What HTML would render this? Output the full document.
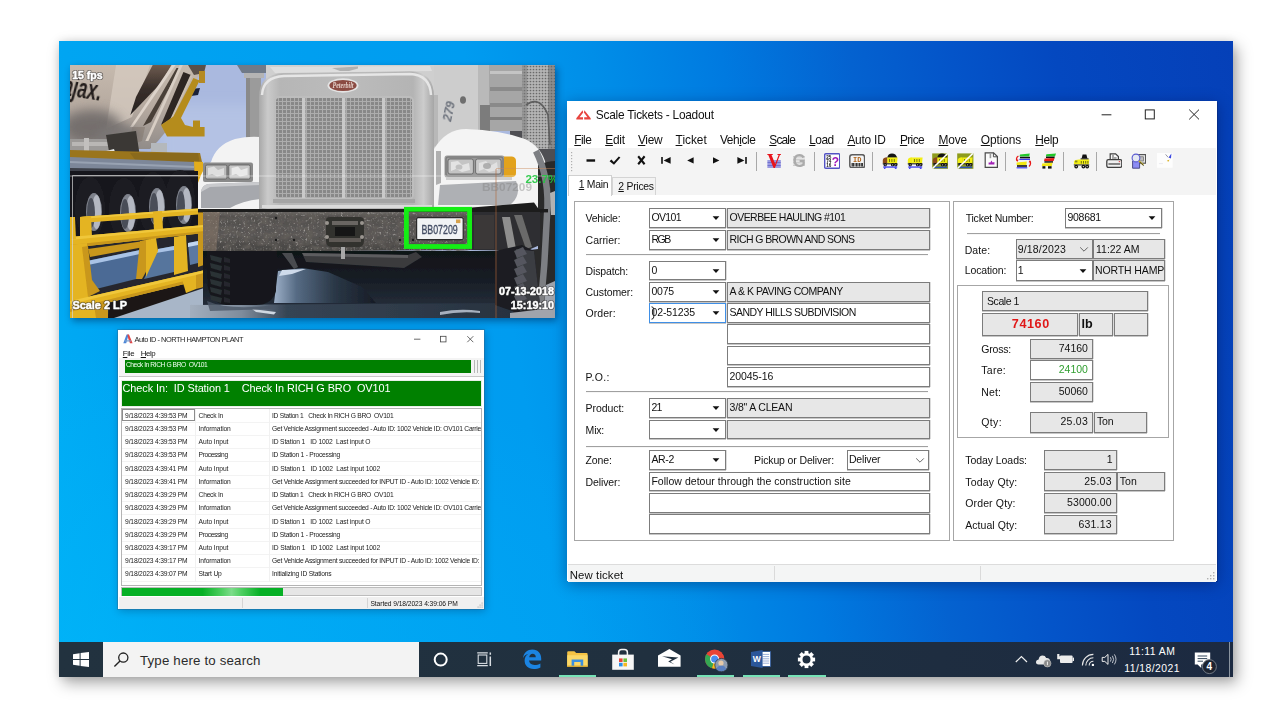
<!DOCTYPE html>
<html lang="en"><head><meta charset="utf-8"><title>Scale Tickets - Loadout</title>
<style>
html,body{margin:0;padding:0}
body{width:1284px;height:722px;background:#fff;position:relative;overflow:hidden;font-family:'Liberation Sans',sans-serif;color:#000}
body div,body span.t,body svg{position:absolute}
span.t{white-space:pre;line-height:1;display:block}
u{text-decoration:underline;text-underline-offset:1px}

</style></head>
<body>
<div style="left:59px;top:41px;width:1174px;height:636px;background:linear-gradient(80deg,#00aef5 0%,#00a5f2 9%,#009ff0 28%,#009cf0 40%,#008ee8 50%,#007ae0 60%,#0462d0 70%,#0454c9 78%,#0448c0 86%,#0540b8 100%);box-shadow:0 0 8px rgba(0,0,0,.10),4px 6px 14px rgba(0,0,0,.34);"></div>
<div style="left:59px;top:41px;width:1174px;height:636px;background:radial-gradient(ellipse 620px 330px at 6% 100%,rgba(0,184,250,.5),rgba(0,184,250,0) 100%);"></div>
<svg style="left:70px;top:65px;box-shadow:2px 3px 7px rgba(0,20,60,.45)" width="485" height="253" viewBox="0 0 485 253"><defs><filter id="bl" x="-5%" y="-5%" width="110%" height="110%"><feGaussianBlur stdDeviation="0.7"/></filter><filter id="bl2" x="-20%" y="-20%" width="140%" height="140%"><feGaussianBlur stdDeviation="3"/></filter><filter id="bl3" x="-30%" y="-30%" width="160%" height="160%"><feGaussianBlur stdDeviation="6"/></filter><linearGradient id="drum" x1="0" y1="0" x2="0" y2="1"><stop offset="0" stop-color="#c6baae"/><stop offset=".5" stop-color="#b6aaa0"/><stop offset="1" stop-color="#918c89"/></linearGradient><linearGradient id="surr" x1="0" y1="0" x2="1" y2="0"><stop offset="0" stop-color="#a8a8a8"/><stop offset=".05" stop-color="#cacaca"/><stop offset=".12" stop-color="#b6b6b6"/><stop offset=".5" stop-color="#bcbcbc"/><stop offset=".88" stop-color="#b4b4b4"/><stop offset=".94" stop-color="#cccccc"/><stop offset="1" stop-color="#a6a6a6"/></linearGradient><linearGradient id="bump" x1="0" y1="0" x2="0" y2="1"><stop offset="0" stop-color="#6a6764"/><stop offset=".12" stop-color="#53504e"/><stop offset=".55" stop-color="#5a5755"/><stop offset="1" stop-color="#454341"/></linearGradient><linearGradient id="gnd" x1="0" y1="0" x2="1" y2="0"><stop offset="0" stop-color="#9db0c8"/><stop offset=".22" stop-color="#566b84"/><stop offset=".6" stop-color="#2a3746"/><stop offset="1" stop-color="#171c26"/></linearGradient><pattern id="mesh" width="4" height="4" patternUnits="userSpaceOnUse"><rect width="4" height="4" fill="#8b8b8b"/><path d="M0 0.5h4M0.5 0v4" stroke="#b9b9b9" stroke-width="1"/></pattern><pattern id="perf" width="3" height="3" patternUnits="userSpaceOnUse"><rect width="3" height="3" fill="#b4b4b4"/><circle cx="1.5" cy="1.5" r="0.85" fill="#6a6a6a"/></pattern><pattern id="spk" width="9" height="7" patternUnits="userSpaceOnUse"><circle cx="2" cy="2" r="0.8" fill="#a8a49e"/><circle cx="6.5" cy="4.6" r="0.7" fill="#3a3836"/><circle cx="4.6" cy="0.8" r="0.5" fill="#c8c4be"/><circle cx="7.8" cy="1.6" r="0.6" fill="#8c8884"/><circle cx="1.2" cy="5.6" r="0.6" fill="#444"/></pattern><linearGradient id="st1" x1="0" y1="0" x2="0" y2="1"><stop offset="0" stop-color="#6e5c50"/><stop offset=".45" stop-color="#3a302b"/><stop offset="1" stop-color="#262120"/></linearGradient><linearGradient id="bot" x1="0" y1="0" x2="1" y2="0"><stop offset="0" stop-color="#a3afbe"/><stop offset=".16" stop-color="#7f8c9c"/><stop offset=".3" stop-color="#364454"/><stop offset="1" stop-color="#28323f"/></linearGradient><linearGradient id="under" x1="0" y1="0" x2="0" y2="1"><stop offset="0" stop-color="#101317"/><stop offset=".4" stop-color="#171c24"/><stop offset=".8" stop-color="#232c38"/><stop offset="1" stop-color="#2c3644"/></linearGradient><filter id="nzl" x="0" y="0" width="100%" height="100%"><feTurbulence type="fractalNoise" baseFrequency="0.42" numOctaves="2" seed="4"/><feColorMatrix type="matrix" values="0 0 0 0 0.78  0 0 0 0 0.76  0 0 0 0 0.73  3.4 0 0 0 -2.05"/></filter><filter id="nzd" x="0" y="0" width="100%" height="100%"><feTurbulence type="fractalNoise" baseFrequency="0.11 0.16" numOctaves="2" seed="9"/><feColorMatrix type="matrix" values="0 0 0 0 0.12  0 0 0 0 0.11  0 0 0 0 0.10  0 2.6 0 0 -1.05"/></filter><clipPath id="pc"><rect width="485" height="253"/></clipPath></defs><g clip-path="url(#pc)"><g filter="url(#bl)"><rect width="485" height="253" fill="#aab9df"/><rect x="90" y="40" width="110" height="60" fill="#b4c2e4" filter="url(#bl3)"/><path d="M0 0 L134 0 L127 14 L118 32 L108 50 L98 64 L88 76 L80 84 L0 84Z" fill="url(#drum)"/><path d="M46 0 L80 0 L62 52 L36 64Z" fill="#d6cbc0" opacity=".75"/><path d="M82.7 0 L101.5 0 L91 18 L60.3 50 L66 32Z" fill="url(#st1)"/><path d="M102 0 L105.6 0 L63 62 L60 62Z" fill="#ddd3ca"/><path d="M106.5 3 L110 3 L81 57 L73 61Z" fill="#4a3f38"/><path d="M109.8 0 L112.8 0 L78.4 76 L75.4 76Z" fill="#d8cec4"/><path d="M113.4 7 L121 10 L101 54 L91 60Z" fill="#2e2620"/><path d="M120.4 10 L122.4 11 L101.4 56 L99.4 56Z" fill="#cbbfb2"/><path d="M62 62 L75 62 L72 76 L60 80Z" fill="#8a7f76" opacity=".7"/><ellipse cx="22" cy="62" rx="30" ry="17" fill="#6f6b69" filter="url(#bl3)" opacity=".9"/><ellipse cx="48" cy="70" rx="22" ry="10" fill="#7a7674" filter="url(#bl2)" opacity=".8"/></g><text x="-8" y="31" font-family="'Liberation Sans',sans-serif" font-size="27" font-weight="700" font-style="italic" fill="#241c1a" transform="rotate(9 0 31)" textLength="39" lengthAdjust="spacingAndGlyphs" filter="url(#bl)">ajax.</text><g filter="url(#bl)"><path d="M118 0 L136 0 L134 8 L124 10Z" fill="#5a5048"/><rect x="129" y="6" width="6" height="12" fill="#b58a24"/><path d="M121 24 L130 23 L128 30 L121 31Z" fill="#1d2438"/><path d="M123.4 13 L129.6 15.4 L111 53 L115 60 L123 62 L123 55.5 L130 55.5 L130 62 L134.6 62 L134.6 71.6 L97 71.6 L91 60 L103.4 51.6Z" fill="#b58c1f"/><rect x="0" y="74" width="52" height="12" fill="#9c9a98"/><rect x="2" y="77" width="46" height="4" fill="#b9b7b5"/><rect x="14" y="73" width="5" height="13" fill="#c2c0be"/><path d="M36 70 L66 66 L70 92 L40 92Z" fill="#3a3834"/><rect x="81" y="78" width="16" height="14" fill="#b4b8bc"/><path d="M36 86 L44 84 L46 90 L38 91Z" fill="#e8e8e8"/><path d="M0 85 L130 88 L132 97 L0 94Z" fill="#9a751c"/><path d="M60 88 L128 88 L130 100 L66 96Z" fill="#8a6a1e"/><path d="M0 92 L124 97 L126 106 L0 105Z" fill="#7d8799"/><path d="M0 96 L124 101 L124 103 L0 98Z" fill="#98a2b2"/><path d="M0 103 L126 105 L126 108 L0 107Z" fill="#3c4048"/><path d="M124 96.5 L133 97 L133 119 L125 119Z" fill="#e3ad1e"/><rect x="0" y="106" width="128" height="70" fill="#15151a"/><ellipse cx="20" cy="143" rx="15" ry="31" fill="#1e1e24"/><ellipse cx="24" cy="147" rx="8" ry="19" fill="#7e828c"/><ellipse cx="26.5" cy="147" rx="4.6" ry="17" fill="#b4b8c2"/><ellipse cx="21" cy="148" rx="4" ry="15" fill="#4a4e58"/><ellipse cx="54" cy="144" rx="15" ry="31" fill="#1e1e24"/><ellipse cx="58" cy="148" rx="8" ry="19" fill="#7e828c"/><ellipse cx="60.5" cy="148" rx="4.6" ry="17" fill="#b4b8c2"/><ellipse cx="55" cy="149" rx="4" ry="15" fill="#4a4e58"/><ellipse cx="83" cy="138" rx="15" ry="31" fill="#1e1e24"/><ellipse cx="87" cy="142" rx="8" ry="19" fill="#7e828c"/><ellipse cx="89.5" cy="142" rx="4.6" ry="17" fill="#b4b8c2"/><ellipse cx="84" cy="143" rx="4" ry="15" fill="#4a4e58"/><ellipse cx="110" cy="136" rx="15" ry="31" fill="#1e1e24"/><ellipse cx="114" cy="140" rx="8" ry="19" fill="#7e828c"/><ellipse cx="116.5" cy="140" rx="4.6" ry="17" fill="#b4b8c2"/><ellipse cx="111" cy="141" rx="4" ry="15" fill="#4a4e58"/><path d="M0 176 L135 160 L135 253 L0 253Z" fill="#26282e"/><path d="M17 196 L70 185 L70 213 L26 224 L18 214Z" fill="#4b6b95"/><path d="M17 196 L70 185 L70 189 L18 200Z" fill="#a9c3e6"/><path d="M74 214 L88 184 L104 181 L104 207Z" fill="#56749d"/><path d="M88 184 L104 181 L104 185 L86 188Z" fill="#a9c3e6"/><path d="M118 178 L128 176 L128 198 L120 200Z" fill="#5b79a2"/><path d="M118 178 L128 176 L128 180 L118 182Z" fill="#c2d6f0"/><path d="M38 253 L40 238 L112 219 L118 229 L56 253Z" fill="#1c1917"/><path d="M44 253 L140 221 L190 221 L190 253Z" fill="#a8b6c8"/><path d="M10 152 L135 143 L135 149 L10 158Z" fill="#e4b422"/><path d="M10 152 L135 143 L135 145 L10 154Z" fill="#f0c73a"/><path d="M10 152 L21 151 L22 172 L10 174Z" fill="#e4b422"/><path d="M83 147 L92 146 L93 164 L84 165Z" fill="#e4b422"/><path d="M128 144 L134 144 L134 162 L128 163Z" fill="#c9971a"/><path d="M0 172 L134 160 L134 168 L0 183Z" fill="#e4b422"/><path d="M0 172 L134 160 L134 162 L0 175Z" fill="#f0c73a"/><path d="M0 180 L134 166 L134 168 L0 183Z" fill="#c9971a"/><path d="M0 152 L5 152 L6 174 L0 175Z" fill="#e4b422"/><path d="M0 180 L17 178 L19 253 L0 253Z" fill="#e4b422"/><path d="M12 182 L18 181 L22 215 L30 226 L18 232Z" fill="#c9971a"/><path d="M18 184 L74 176 L74 182 L20 192Z" fill="#c9971a"/><path d="M70 176 L80 174 L82 196 L72 214 L66 214Z" fill="#c9971a"/><path d="M76 175 L86 173 L88 186 L76 212Z" fill="#e4b422"/><path d="M104 172 L116 170 L118 206 L104 210Z" fill="#e4b422"/><path d="M128 168 L134 167 L134 200 L128 202Z" fill="#c9971a"/><path d="M0 236 L135 205 L135 214 L0 247Z" fill="#e4b422"/><path d="M0 236 L135 205 L135 208 L0 239Z" fill="#f0c73a"/><path d="M0 244 L135 211 L135 214 L0 247Z" fill="#c9971a"/><path d="M10 244 L38 238 L38 253 L10 253Z" fill="#e4b422"/><path d="M24 240 L38 237 L38 253 L26 253Z" fill="#c9971a"/><path d="M112 214 L126 211 L126 224 L116 228Z" fill="#e4b422"/><path d="M126 210 L134 208 L134 222 L126 224Z" fill="#c9971a"/><rect x="176" y="0" width="15" height="74" fill="#9b9b9b"/><rect x="176" y="0" width="4" height="74" fill="#8a8a8a"/><path d="M167 0 L214 0 L206 8 L172 8Z" fill="#6f7a88"/><rect x="174" y="8" width="20" height="5" fill="#b4b4b4"/><path d="M128 146 L128 118 Q134 100 141 97 Q146 80 165 74 Q178 71 190 72 L192 146Z" fill="#f3f3f3"/><path d="M131 143 L131 127 Q132 120 138 119 L190 117 L190 134 Q172 136 160 143Z" fill="#a6a8ad"/><path d="M131 127 Q132 120 138 119 L190 117 L190 120 L140 122Z" fill="#c9cacd"/><rect x="133" y="97.6" width="50" height="19.4" rx="2" fill="#8a8a8a"/><rect x="135.5" y="100" width="21.4" height="14" rx="1.5" fill="#bcbcbc" stroke="#5a5a5a" stroke-width="0.8"/><rect x="158.8" y="100" width="21.4" height="14" rx="1.5" fill="#c8c8c8" stroke="#5a5a5a" stroke-width="0.8"/><path d="M138 103 L144 101.6 L148 105 L154 103 L154 110 L147 111.6 L142 109 L138 110.6Z" fill="#e6e6e6" opacity=".8"/><path d="M161.6 103 L168 101.6 L171 105 L177.6 103 L177.6 110 L170 111.6 L166 109 L161.6 110.6Z" fill="#f0f0f0" opacity=".85"/><path d="M196 0 L408 0 L408 70 L196 70Z" fill="#cfcfcf"/><path d="M189 144 L189 32 Q189 9 214 8 L340 6 Q364 7 364 32 L364 144Z" fill="url(#surr)"/><path d="M192 30 Q193 12 214 11 L340 9 Q360 10 361 30" fill="none" stroke="#e6e6e6" stroke-width="2.5"/><path d="M200 2 L360 1 L362 6 L205 8Z" fill="#dedede"/><path d="M262 3 L288 1.5 L288 3.5 L279 6 L270 6Z" fill="#b0b0b0"/><rect x="205" y="32" width="138" height="102" rx="4" fill="url(#mesh)"/><rect x="205" y="32" width="138" height="102" rx="4" fill="#7a7a7a" opacity=".18"/><rect x="232" y="33" width="3.4" height="100" fill="#c9c9c9"/><rect x="272" y="33" width="3.4" height="100" fill="#c9c9c9"/><rect x="312" y="33" width="3.4" height="100" fill="#c9c9c9"/><rect x="205" y="32" width="138" height="102" rx="4" fill="none" stroke="#bdbdbd" stroke-width="2"/><path d="M203 134 L345 134 L345 138 L203 138Z" fill="#a4a4a4"/><path d="M192 140 L362 140 L362 143 L192 143Z" fill="#dadada"/><ellipse cx="273" cy="20.5" rx="15.5" ry="7.2" fill="#e4e4e4"/><ellipse cx="273" cy="20.5" rx="13.6" ry="5.6" fill="#8b4b42"/></g><text x="273" y="23.4" font-family="'Liberation Serif',serif" font-size="8" font-style="italic" font-weight="700" fill="#e4cfc8" text-anchor="middle" textLength="21" lengthAdjust="spacingAndGlyphs" filter="url(#bl)">Peterbilt</text><g filter="url(#bl)"><path d="M364 0 L409 0 L409 70 L386 70 L364 92Z" fill="#cdcdcd"/><path d="M364 30 L368 30 L368 80 L364 82Z" fill="#b8b8b8"/><ellipse cx="393" cy="35" rx="3" ry="3.8" fill="#6e6e6e"/></g><text x="381" y="57" font-family="'Liberation Sans',sans-serif" font-size="12" font-weight="700" font-style="italic" fill="#70757f" transform="rotate(-78 381 57)" filter="url(#bl)">279</text><g filter="url(#bl)"><rect x="440" y="60" width="45" height="90" fill="#505053"/><rect x="408" y="0" width="14" height="66" fill="#b9b9b9"/><rect x="419" y="0" width="34" height="66" fill="#a6a6a6"/><rect x="420" y="6" width="33" height="3" fill="#c4c4c4"/><rect x="420" y="22" width="33" height="4" fill="#8a8a8a"/><rect x="420" y="38" width="33" height="4" fill="#8a8a8a"/><rect x="420" y="52" width="33" height="3" fill="#7e7e7e"/><rect x="410" y="40" width="10" height="26" fill="#7c7c7c"/><rect x="452" y="0" width="33" height="84" fill="url(#perf)"/><rect x="452" y="0" width="5" height="84" fill="#777" opacity=".5"/><rect x="478" y="0" width="7" height="84" fill="#666" opacity=".5"/><path d="M456 40 Q470 30 478 50 L480 80" fill="none" stroke="#5e5e5e" stroke-width="1.6"/><path d="M364 146 L364 84 Q376 64 396 64 Q430 65 455 74 Q472 82 476 100 L478 146Z" fill="#f4f4f4"/><path d="M368 140 L370 120 L446 116 Q452 130 440 140Z" fill="#aeb0b4"/><path d="M396 142 L470 138 L470 146 L396 146Z" fill="#e9e9e9"/><path d="M366 86 L371 86 L371 118 L366 120Z" fill="#b0b0b0"/><rect x="374.5" y="90.5" width="60" height="22" rx="2.5" fill="#9a9a9a"/><rect x="376" y="92" width="57" height="19" rx="2" fill="none" stroke="#6e6e6e" stroke-width="0.9"/><rect x="378" y="94" width="25.4" height="15" rx="2" fill="#c4c4c4" stroke="#5e5e5e" stroke-width="0.8"/><rect x="405.6" y="94" width="25.4" height="15" rx="2" fill="#cacaca" stroke="#5e5e5e" stroke-width="0.8"/><path d="M381 97 L388 96 L392 100 L399 98 L400 105 L392 107 L386 104 L381 106Z" fill="#ebebeb" opacity=".8"/><path d="M409 98 L416 96 L420 101 L427 97 L428 105 L419 107 L414 104 L409 106Z" fill="#e6e6e6" opacity=".8"/><ellipse cx="417" cy="101" rx="4" ry="3" fill="#9a9a9a" opacity=".7"/><ellipse cx="389" cy="102" rx="3.4" ry="2.6" fill="#a8a8a8" opacity=".6"/><path d="M434 91.5 L442 91.5 Q446 92 446 96 L446 108 Q446 112 442 112 L434 112Z" fill="#e2a21c"/><rect x="376" y="112" width="66" height="3" fill="#cfcfcf"/><path d="M468 100 Q478 96 485 96 L485 253 L436 253 L436 188 L468 184Z" fill="#2b2b2c"/><path d="M466 86 Q480 114 477 150 Q475 200 470 250" fill="none" stroke="#7d7f83" stroke-width="6.5"/><path d="M480 128 L485 126 L485 150 L481 150Z" fill="#b4b4b4"/><path d="M440 190 L464 186 L466 240 L442 246Z" fill="#3b3d42"/><rect x="128" y="144" width="350" height="3.4" fill="#1c1c1c"/><path d="M402 142.4 L464 137.6 L471 147.4 L402 147.4Z" fill="#1b1b1b"/><path d="M133 147 L404 147 L404 185 L133 187Z" fill="url(#bump)"/><path d="M133 147 L404 147 L404 185 L133 187Z" fill="url(#spk)" opacity=".3"/><rect x="133" y="147" width="271" height="39" filter="url(#nzd)"/><rect x="133" y="147" width="271" height="39" filter="url(#nzl)" opacity=".55"/><path d="M133 147 L150 147 L146 187 L133 187Z" fill="#8a7868" opacity=".5"/><path d="M402 147 L470 147 L470 180 L456 186 L402 185Z" fill="#2f2f30"/><path d="M404 150 L424 150 L424 184 L404 184Z" fill="#3a3938"/><path d="M432 152 L440 152 L446 184 L438 184Z" fill="#8e8e8e"/><path d="M444 150 L452 150 L462 182 L456 184Z" fill="#6a6a6a"/><circle cx="206" cy="153" r="1.2" fill="#1a1a1a"/><circle cx="206" cy="175" r="1.2" fill="#1a1a1a"/><circle cx="224" cy="175" r="1.2" fill="#1a1a1a"/><circle cx="330" cy="175" r="1.2" fill="#1a1a1a"/><circle cx="343" cy="175" r="1.2" fill="#1a1a1a"/><path d="M256 155 Q256 152 260 152 L290 152 Q294 152 294 156 L294 176 Q294 182 288 182 L262 182 Q256 182 256 176Z" fill="#33312f"/><rect x="262" y="156" width="26" height="4" fill="#6a6662"/><rect x="265" y="162" width="20" height="9" fill="#151414"/><rect x="259" y="173" width="32" height="4" fill="#5e5a56"/><circle cx="257" cy="158" r="2" fill="#9a958f"/><circle cx="292" cy="158" r="2" fill="#9a958f"/><circle cx="257" cy="172" r="2" fill="#9a958f"/><circle cx="292" cy="172" r="2" fill="#9a958f"/><rect x="133" y="186" width="310" height="67" fill="url(#under)"/><path d="M204 238 L208 206 L232 203 L258 207 L292 222 L306 238Z" fill="url(#gnd)"/><path d="M209 211 L212 205 L236 204 L222 209Z" fill="#cfdbeb"/><path d="M120 240 L443 238 L443 253 L120 253Z" fill="url(#bot)"/><path d="M182 244 L206 247 L204 249.5 L186 247Z" fill="#d0d8e2"/><path d="M370 247 Q390 243 410 246 L410 248 Q390 246 370 250Z" fill="#a6b0be"/><path d="M232 188 L338 190 L346 187 L352 192 L334 203 L236 197Z" fill="#3a3b3e"/><path d="M232 188 L338 190 L338 193 L234 191Z" fill="#5d5d5f"/><rect x="271" y="182" width="4" height="12" fill="#a8a8a8"/><path d="M212 188 L222 188 L228 202 L224 204Z" fill="#4a4c50"/><path d="M137 186 L206.5 186 L206 226 Q202 240 186 240 L156 240 Q140 238 137.5 220Z" fill="#17191d"/><path d="M140 190 L152 193 L151 198 L141 195Z" fill="#2c3036"/><path d="M154 192 L160 194 L160 198 L154 197Z" fill="#25282d"/><path d="M140 198 L152 201 L151 206 L141 203Z" fill="#2c3036"/><path d="M154 200 L160 202 L160 206 L154 205Z" fill="#25282d"/><path d="M140 206 L152 209 L151 214 L141 211Z" fill="#2c3036"/><path d="M154 208 L160 210 L160 214 L154 213Z" fill="#25282d"/><path d="M140 214 L152 217 L151 222 L141 219Z" fill="#2c3036"/><path d="M154 216 L160 218 L160 222 L154 221Z" fill="#25282d"/><path d="M140 222 L152 225 L151 230 L141 227Z" fill="#2c3036"/><path d="M154 224 L160 226 L160 230 L154 229Z" fill="#25282d"/><path d="M140 230 L152 233 L151 238 L141 235Z" fill="#2c3036"/><path d="M154 232 L160 234 L160 238 L154 237Z" fill="#25282d"/><path d="M137 236 Q160 246 204 240 L204 244 L140 246Z" fill="#4c5866" opacity=".8"/><path d="M425 186 L452 180 L464 186 L470 240 L448 248 L425 240Z" fill="#1b1d21"/><path d="M446 184 L464 186 L470 240 L450 246Z" fill="#3a3c42"/><path d="M444 186 L453 182 L457 189 L447 193Z" fill="#54575e"/><path d="M444 195 L453 191 L457 198 L447 202Z" fill="#54575e"/><path d="M444 204 L453 200 L457 207 L447 211Z" fill="#54575e"/><path d="M444 213 L453 209 L457 216 L447 220Z" fill="#54575e"/><path d="M444 222 L453 218 L457 225 L447 229Z" fill="#54575e"/><path d="M444 231 L453 227 L457 234 L447 238Z" fill="#54575e"/><path d="M476 220 L485 216 L485 253 L440 253 L440 248 L474 244Z" fill="#a0a4ac"/></g><rect x="346.6" y="152.7" width="46.6" height="22" rx="1.5" fill="#f1f3f4" stroke="#2b2b2b" stroke-width="1.2" filter="url(#bl)"/><rect x="386" y="154.5" width="4.4" height="3.6" fill="#d6a24e" filter="url(#bl)"/><text x="351.4" y="168.9" font-family="'Liberation Sans',sans-serif" font-size="13.6" fill="#434d64" stroke="#434d64" stroke-width="0.35" textLength="36.4" lengthAdjust="spacingAndGlyphs" filter="url(#bl)">BB07209</text><rect x="336.4" y="144.3" width="63.2" height="37.2" fill="none" stroke="#14ee14" stroke-width="4.8"/><rect x="0" y="110.5" width="485" height="1" fill="#fff" opacity=".45"/><path d="M2.5 253 L2.5 110.5 L128 110.5" fill="none" stroke="#d6d6d6" stroke-width="1" opacity=".7"/><rect x="425.4" y="104" width="1.2" height="149" fill="#b4683a" opacity=".5"/><rect x="426" y="103" width="59" height="1" fill="#c98a5c" opacity=".45"/><text x="455.4" y="118.2" font-family="'Liberation Sans',sans-serif" font-size="10.5" font-weight="700" fill="#22c840" opacity=".9" textLength="33" lengthAdjust="spacingAndGlyphs">23.7%</text><text x="412" y="126.4" font-family="'Liberation Sans',sans-serif" font-size="10.5" font-weight="700" fill="#808080" opacity=".42" textLength="50" lengthAdjust="spacingAndGlyphs">BB07209</text><text x="2.2" y="14" font-size="10.6" font-family="'Liberation Sans',sans-serif" font-weight="700" fill="#222" stroke="#222" stroke-width="2.2" stroke-opacity=".55" fill-opacity=".55" stroke-linejoin="round" textLength="30.5" lengthAdjust="spacingAndGlyphs">15 fps</text><text x="2.2" y="14" font-size="10.6" font-family="'Liberation Sans',sans-serif" font-weight="700" fill="#fff" stroke="#fff" stroke-width="0.45" stroke-linejoin="round" textLength="30.5" lengthAdjust="spacingAndGlyphs">15 fps</text><text x="2.4" y="244.2" font-size="10.8" font-family="'Liberation Sans',sans-serif" font-weight="700" fill="#222" stroke="#222" stroke-width="2.2" stroke-opacity=".55" fill-opacity=".55" stroke-linejoin="round" textLength="54.6" lengthAdjust="spacingAndGlyphs">Scale 2 LP</text><text x="2.4" y="244.2" font-size="10.8" font-family="'Liberation Sans',sans-serif" font-weight="700" fill="#fff" stroke="#fff" stroke-width="0.45" stroke-linejoin="round" textLength="54.6" lengthAdjust="spacingAndGlyphs">Scale 2 LP</text><text x="429" y="230.4" font-size="10.4" font-family="'Liberation Sans',sans-serif" font-weight="700" fill="#222" stroke="#222" stroke-width="2.2" stroke-opacity=".55" fill-opacity=".55" stroke-linejoin="round" textLength="55" lengthAdjust="spacingAndGlyphs">07-13-2018</text><text x="429" y="230.4" font-size="10.4" font-family="'Liberation Sans',sans-serif" font-weight="700" fill="#fff" stroke="#fff" stroke-width="0.45" stroke-linejoin="round" textLength="55" lengthAdjust="spacingAndGlyphs">07-13-2018</text><text x="440.8" y="243.7" font-size="10.4" font-family="'Liberation Sans',sans-serif" font-weight="700" fill="#222" stroke="#222" stroke-width="2.2" stroke-opacity=".55" fill-opacity=".55" stroke-linejoin="round" textLength="43.2" lengthAdjust="spacingAndGlyphs">15:19:10</text><text x="440.8" y="243.7" font-size="10.4" font-family="'Liberation Sans',sans-serif" font-weight="700" fill="#fff" stroke="#fff" stroke-width="0.45" stroke-linejoin="round" textLength="43.2" lengthAdjust="spacingAndGlyphs">15:19:10</text></g></svg>
<div style="left:118px;top:330px;width:366px;height:279px;background:#fff;box-shadow:0 0 0 1px rgba(60,90,120,.35),1px 2px 8px rgba(0,0,40,.25);"></div>
<svg style="left:122.5px;top:334px" width="10" height="10" viewBox="0 0 10 10"><path d="M0.3 9.2 L3.6 0.6 L5.6 0.6 L3.2 9.2Z" fill="#4a86d8"/><path d="M4.4 0.6 L6 0.6 L9.6 9.2 L7 9.2 L5.2 4.6Z" fill="#e04848"/><path d="M2.2 6.2 L7.6 6.2 L8 7.6 L1.6 7.6Z" fill="#7aa0d0"/></svg>
<span class="t" style="left:134.50px;top:336.00px;font-size:7.4px;letter-spacing:-0.469px;color:#222;">Auto ID - NORTH HAMPTON PLANT</span>
<svg style="left:410px;top:332px" width="70" height="14" viewBox="0 0 70 14"><g stroke="#444" stroke-width="0.8" fill="none"><path d="M4 7.2h6.4"/><rect x="30.4" y="4.3" width="5.6" height="5.6"/><path d="M57.3 4.2l6 6M63.3 4.2l-6 6"/></g></svg>
<span class="t" style="left:122.80px;top:350.00px;font-size:7.9px;letter-spacing:-0.305px;color:#111;"><u>F</u>ile</span>
<span class="t" style="left:140.70px;top:350.00px;font-size:7.9px;letter-spacing:-0.434px;color:#111;"><u>H</u>elp</span>
<div style="left:119px;top:358px;width:365px;height:19px;background:#f4f4f4;"></div>
<div style="left:124.7px;top:359.6px;width:346.3px;height:13.899999999999977px;background:#008000;"></div>
<div style="left:119px;top:376px;width:365px;height:1px;background:#c8c8c8;"></div>
<div style="left:473.5px;top:360px;width:1.0px;height:13px;background:#b8b8b8;"></div>
<div style="left:476.5px;top:360px;width:1.0px;height:13px;background:#b8b8b8;"></div>
<div style="left:479.5px;top:360px;width:1.0px;height:13px;background:#b8b8b8;"></div>
<span class="t" style="left:125.90px;top:362.00px;font-size:6.7px;letter-spacing:-0.425px;color:#f2fff2;">Check In RICH G BRO  OV101</span>
<div style="left:121px;top:379.6px;width:360.6px;height:27.0px;background:#008000;border:1px solid #e8efe8;box-sizing:border-box;"></div>
<span class="t" style="left:122.50px;top:383.00px;font-size:10.9px;letter-spacing:-0.071px;color:#fff;">Check In:  ID Station 1    Check In RICH G BRO  OV101</span>
<div style="left:121px;top:408px;width:360.6px;height:177.5px;background:#fff;border:1px solid #b4b4b4;box-sizing:border-box;"></div>
<span class="t" style="left:125.10px;top:413.00px;font-size:6.7px;letter-spacing:-0.171px;color:#1a1a1a;">9/18/2023 4:39:53 PM</span>
<span class="t" style="left:198.60px;top:413.00px;font-size:6.7px;letter-spacing:-0.251px;color:#1a1a1a;">Check In</span>
<span class="t" style="left:272.00px;top:413.00px;font-size:6.7px;letter-spacing:-0.282px;color:#1a1a1a;">ID Station 1   Check In RICH G BRO  OV101</span>
<div style="left:122px;top:421.6px;width:359px;height:1.0px;background:#f3f3f3;"></div>
<span class="t" style="left:125.10px;top:426.00px;font-size:6.7px;letter-spacing:-0.171px;color:#1a1a1a;">9/18/2023 4:39:53 PM</span>
<span class="t" style="left:198.60px;top:426.00px;font-size:6.7px;letter-spacing:-0.124px;color:#1a1a1a;">Information</span>
<span class="t" style="left:272.00px;top:426.00px;font-size:6.7px;letter-spacing:-0.259px;color:#1a1a1a;">Get Vehicle Assignment succeeded - Auto ID: 1002 Vehicle ID: OV101 Carrie</span>
<div style="left:122px;top:434.9px;width:359px;height:1.0px;background:#f3f3f3;"></div>
<span class="t" style="left:125.10px;top:439.00px;font-size:6.7px;letter-spacing:-0.171px;color:#1a1a1a;">9/18/2023 4:39:53 PM</span>
<span class="t" style="left:198.60px;top:439.00px;font-size:6.7px;letter-spacing:-0.070px;color:#1a1a1a;">Auto Input</span>
<span class="t" style="left:272.00px;top:439.00px;font-size:6.7px;letter-spacing:-0.148px;color:#1a1a1a;">ID Station 1   ID 1002  Last input O</span>
<div style="left:122px;top:448.1px;width:359px;height:1.0px;background:#f3f3f3;"></div>
<span class="t" style="left:125.10px;top:452.00px;font-size:6.7px;letter-spacing:-0.171px;color:#1a1a1a;">9/18/2023 4:39:53 PM</span>
<span class="t" style="left:198.60px;top:452.00px;font-size:6.7px;letter-spacing:-0.389px;color:#1a1a1a;">Processing</span>
<span class="t" style="left:272.00px;top:452.00px;font-size:6.7px;letter-spacing:-0.239px;color:#1a1a1a;">ID Station 1 - Processing</span>
<div style="left:122px;top:461.4px;width:359px;height:1.0px;background:#f3f3f3;"></div>
<span class="t" style="left:125.10px;top:466.00px;font-size:6.7px;letter-spacing:-0.171px;color:#1a1a1a;">9/18/2023 4:39:41 PM</span>
<span class="t" style="left:198.60px;top:466.00px;font-size:6.7px;letter-spacing:-0.070px;color:#1a1a1a;">Auto Input</span>
<span class="t" style="left:272.00px;top:466.00px;font-size:6.7px;letter-spacing:-0.138px;color:#1a1a1a;">ID Station 1   ID 1002  Last input 1002</span>
<div style="left:122px;top:474.6px;width:359px;height:1.0px;background:#f3f3f3;"></div>
<span class="t" style="left:125.10px;top:479.00px;font-size:6.7px;letter-spacing:-0.171px;color:#1a1a1a;">9/18/2023 4:39:41 PM</span>
<span class="t" style="left:198.60px;top:479.00px;font-size:6.7px;letter-spacing:-0.124px;color:#1a1a1a;">Information</span>
<span class="t" style="left:272.00px;top:479.00px;font-size:6.7px;letter-spacing:-0.244px;color:#1a1a1a;">Get Vehicle Assignment succeeded for INPUT ID - Auto ID: 1002 Vehicle ID:</span>
<div style="left:122px;top:487.8px;width:359px;height:1.0px;background:#f3f3f3;"></div>
<span class="t" style="left:125.10px;top:492.00px;font-size:6.7px;letter-spacing:-0.171px;color:#1a1a1a;">9/18/2023 4:39:29 PM</span>
<span class="t" style="left:198.60px;top:492.00px;font-size:6.7px;letter-spacing:-0.251px;color:#1a1a1a;">Check In</span>
<span class="t" style="left:272.00px;top:492.00px;font-size:6.7px;letter-spacing:-0.282px;color:#1a1a1a;">ID Station 1   Check In RICH G BRO  OV101</span>
<div style="left:122px;top:501.1px;width:359px;height:1.0px;background:#f3f3f3;"></div>
<span class="t" style="left:125.10px;top:505.00px;font-size:6.7px;letter-spacing:-0.171px;color:#1a1a1a;">9/18/2023 4:39:29 PM</span>
<span class="t" style="left:198.60px;top:505.00px;font-size:6.7px;letter-spacing:-0.124px;color:#1a1a1a;">Information</span>
<span class="t" style="left:272.00px;top:505.00px;font-size:6.7px;letter-spacing:-0.259px;color:#1a1a1a;">Get Vehicle Assignment succeeded - Auto ID: 1002 Vehicle ID: OV101 Carrie</span>
<div style="left:122px;top:514.3px;width:359px;height:1.0px;background:#f3f3f3;"></div>
<span class="t" style="left:125.10px;top:519.00px;font-size:6.7px;letter-spacing:-0.171px;color:#1a1a1a;">9/18/2023 4:39:29 PM</span>
<span class="t" style="left:198.60px;top:519.00px;font-size:6.7px;letter-spacing:-0.070px;color:#1a1a1a;">Auto Input</span>
<span class="t" style="left:272.00px;top:519.00px;font-size:6.7px;letter-spacing:-0.148px;color:#1a1a1a;">ID Station 1   ID 1002  Last input O</span>
<div style="left:122px;top:527.6px;width:359px;height:1.0px;background:#f3f3f3;"></div>
<span class="t" style="left:125.10px;top:532.00px;font-size:6.7px;letter-spacing:-0.171px;color:#1a1a1a;">9/18/2023 4:39:29 PM</span>
<span class="t" style="left:198.60px;top:532.00px;font-size:6.7px;letter-spacing:-0.389px;color:#1a1a1a;">Processing</span>
<span class="t" style="left:272.00px;top:532.00px;font-size:6.7px;letter-spacing:-0.239px;color:#1a1a1a;">ID Station 1 - Processing</span>
<div style="left:122px;top:540.8px;width:359px;height:1.0px;background:#f3f3f3;"></div>
<span class="t" style="left:125.10px;top:545.00px;font-size:6.7px;letter-spacing:-0.171px;color:#1a1a1a;">9/18/2023 4:39:17 PM</span>
<span class="t" style="left:198.60px;top:545.00px;font-size:6.7px;letter-spacing:-0.070px;color:#1a1a1a;">Auto Input</span>
<span class="t" style="left:272.00px;top:545.00px;font-size:6.7px;letter-spacing:-0.138px;color:#1a1a1a;">ID Station 1   ID 1002  Last input 1002</span>
<div style="left:122px;top:554.0px;width:359px;height:1.0px;background:#f3f3f3;"></div>
<span class="t" style="left:125.10px;top:558.00px;font-size:6.7px;letter-spacing:-0.171px;color:#1a1a1a;">9/18/2023 4:39:17 PM</span>
<span class="t" style="left:198.60px;top:558.00px;font-size:6.7px;letter-spacing:-0.124px;color:#1a1a1a;">Information</span>
<span class="t" style="left:272.00px;top:558.00px;font-size:6.7px;letter-spacing:-0.244px;color:#1a1a1a;">Get Vehicle Assignment succeeded for INPUT ID - Auto ID: 1002 Vehicle ID:</span>
<div style="left:122px;top:567.3px;width:359px;height:1.0px;background:#f3f3f3;"></div>
<span class="t" style="left:125.10px;top:571.00px;font-size:6.7px;letter-spacing:-0.171px;color:#1a1a1a;">9/18/2023 4:39:07 PM</span>
<span class="t" style="left:198.60px;top:571.00px;font-size:6.7px;letter-spacing:-0.191px;color:#1a1a1a;">Start Up</span>
<span class="t" style="left:272.00px;top:571.00px;font-size:6.7px;letter-spacing:-0.189px;color:#1a1a1a;">Initializing ID Stations</span>
<div style="left:122px;top:580.5px;width:359px;height:1.0px;background:#f3f3f3;"></div>
<div style="left:195.3px;top:409px;width:1.0px;height:173px;background:#f1f1f1;"></div>
<div style="left:268.6px;top:409px;width:1.0px;height:173px;background:#f1f1f1;"></div>
<div style="left:122px;top:409.2px;width:72.6px;height:12.0px;border:1px solid #8c8c8c;box-sizing:border-box;"></div>
<div style="left:121px;top:587px;width:360.6px;height:9px;background:#e6e6e6;border:1px solid #bcbcbc;box-sizing:border-box;"></div>
<div style="left:121.5px;top:587.5px;width:161.5px;height:8.0px;background:linear-gradient(90deg,#06b025 0%,#06b025 50%,#4fcf62 62%,#7cdc8a 68%,#4fcf62 74%,#06b025 86%,#06b025 100%);"></div>
<div style="left:119px;top:597px;width:365px;height:12px;background:#f0f0f0;"></div>
<div style="left:242px;top:598px;width:1px;height:10px;background:#d4d4d4;"></div>
<div style="left:367px;top:598px;width:1px;height:10px;background:#d4d4d4;"></div>
<span class="t" style="left:370.40px;top:601.00px;font-size:6.7px;letter-spacing:-0.069px;color:#111;">Started 9/18/2023 4:39:06 PM</span>
<svg style="left:476px;top:601px" width="8" height="8" viewBox="0 0 8 8"><g fill="#b8b8b8"><rect x="5.5" y="1.5" width="1.2" height="1.2"/><rect x="5.5" y="3.5" width="1.2" height="1.2"/><rect x="3.5" y="3.5" width="1.2" height="1.2"/><rect x="5.5" y="5.5" width="1.2" height="1.2"/><rect x="3.5" y="5.5" width="1.2" height="1.2"/><rect x="1.5" y="5.5" width="1.2" height="1.2"/></g></svg>
<div style="left:567px;top:101px;width:650px;height:480px;background:#fff;box-shadow:1px 1px 0 0 rgba(10,30,90,.35),0 3px 14px rgba(0,10,60,.40);"></div>
<svg style="left:575.5px;top:109.5px" width="15" height="10" viewBox="0 0 15 10"><path d="M6.6 0.3 L7.2 2.5 L3.6 7.2 L7 7.2 L7 9.6 L0.3 9.6 L0.3 8.3Z" fill="#e8443f"/><path d="M8.4 0.3 L14.7 8.3 L14.7 9.6 L8.2 9.6 L8.2 7.2 L11.4 7.2 L7.9 2.5Z" fill="#e8443f"/></svg>
<span class="t" style="left:595.80px;top:110.00px;font-size:11.9px;letter-spacing:-0.244px;color:#111;">Scale Tickets - Loadout</span>
<svg style="left:1095px;top:105px" width="112" height="20" viewBox="0 0 112 20"><g stroke="#222" stroke-width="1" fill="none"><path d="M6.6 9.8h9.8"/><rect x="50.3" y="4.9" width="9" height="9"/><path d="M94.2 4.6l9.8 9.8M104 4.6l-9.8 9.8"/></g></svg>
<span class="t" style="left:574.30px;top:135.00px;font-size:11.9px;letter-spacing:-0.568px;color:#111;"><u>F</u>ile</span>
<span class="t" style="left:605.20px;top:135.00px;font-size:11.9px;letter-spacing:-0.250px;color:#111;"><u>E</u>dit</span>
<span class="t" style="left:637.90px;top:135.00px;font-size:11.9px;letter-spacing:-0.266px;color:#111;"><u>V</u>iew</span>
<span class="t" style="left:675.60px;top:135.00px;font-size:11.9px;letter-spacing:-0.030px;color:#111;"><u>T</u>icket</span>
<span class="t" style="left:720.00px;top:135.00px;font-size:11.9px;letter-spacing:-0.435px;color:#111;">Veh<u>i</u>cle</span>
<span class="t" style="left:769.30px;top:135.00px;font-size:11.9px;letter-spacing:-0.810px;color:#111;"><u>S</u>cale</span>
<span class="t" style="left:809.20px;top:135.00px;font-size:11.9px;letter-spacing:-0.488px;color:#111;"><u>L</u>oad</span>
<span class="t" style="left:847.40px;top:135.00px;font-size:11.9px;letter-spacing:-0.222px;color:#111;"><u>A</u>uto ID</span>
<span class="t" style="left:899.90px;top:135.00px;font-size:11.9px;letter-spacing:-0.599px;color:#111;"><u>P</u>rice</span>
<span class="t" style="left:938.50px;top:135.00px;font-size:11.9px;letter-spacing:-0.195px;color:#111;"><u>M</u>ove</span>
<span class="t" style="left:980.80px;top:135.00px;font-size:11.9px;letter-spacing:-0.112px;color:#111;"><u>O</u>ptions</span>
<span class="t" style="left:1035.30px;top:135.00px;font-size:11.9px;letter-spacing:-0.342px;color:#111;"><u>H</u>elp</span>
<div style="left:568px;top:147.5px;width:648px;height:47.5px;background:#f4f4f4;"></div>
<svg style="left:570px;top:150px" width="4" height="24" viewBox="0 0 4 24"><g fill="#b0b0b0"><rect x="1" y="2" width="1.2" height="1.2"/><rect x="1" y="5" width="1.2" height="1.2"/><rect x="1" y="8" width="1.2" height="1.2"/><rect x="1" y="11" width="1.2" height="1.2"/><rect x="1" y="14" width="1.2" height="1.2"/><rect x="1" y="17" width="1.2" height="1.2"/><rect x="1" y="20" width="1.2" height="1.2"/></g></svg>
<svg style="left:580px;top:150px" width="180" height="22" viewBox="0 0 180 22"><g fill="#111"><rect x="6.5" y="9.3" width="8.6" height="2.4"/><path d="M29.6 11.2 L31.4 9.6 L33.8 12 L38.8 6.4 L40.4 7.6 L34 14.8Z"/><path d="M57.4 7 L59 5.6 L61.4 8.6 L63.8 5.6 L65.4 7 L62.8 10.3 L65.4 13.6 L63.8 15 L61.4 12 L59 15 L57.4 13.6 L60 10.3Z"/><rect x="81.2" y="7" width="1.6" height="6.8"/><path d="M83.6 10.4 L90.6 7 L90.6 13.8Z"/><path d="M107.2 10.4 L113.6 7.2 L113.6 13.6Z"/><path d="M139.4 10.4 L133 7.2 L133 13.6Z"/><path d="M164.4 10.4 L157.4 7 L157.4 13.8Z"/><rect x="165.2" y="7" width="1.6" height="6.8"/></g></svg>
<div style="left:755.8px;top:151.5px;width:1.0px;height:19.5px;background:#a8a8a8;"></div>
<div style="left:813.7px;top:151.5px;width:1.0px;height:19.5px;background:#a8a8a8;"></div>
<div style="left:871.5px;top:151.5px;width:1.0px;height:19.5px;background:#a8a8a8;"></div>
<div style="left:1004.9px;top:151.5px;width:1.0px;height:19.5px;background:#a8a8a8;"></div>
<div style="left:1062.9px;top:151.5px;width:1.0px;height:19.5px;background:#a8a8a8;"></div>
<div style="left:1095.8px;top:151.5px;width:1.0px;height:19.5px;background:#a8a8a8;"></div>
<svg style="left:767px;top:153.6px" width="14.4" height="14.6" viewBox="0 0 14.4 14.6"><rect x="0.4" y="6" width="13.4" height="8" fill="#c8c8f0"/><rect x="0.4" y="6.6" width="13.4" height="0.8" fill="#5a5ac8"/><rect x="0.4" y="8.1" width="13.4" height="0.8" fill="#5a5ac8"/><rect x="0.4" y="9.6" width="13.4" height="0.8" fill="#5a5ac8"/><rect x="0.4" y="11.1" width="13.4" height="0.8" fill="#5a5ac8"/><rect x="0.4" y="12.6" width="13.4" height="0.8" fill="#5a5ac8"/><text x="7.1" y="14.3" font-family="'Liberation Serif',serif" font-size="21.5" font-weight="700" fill="#e8141c" text-anchor="middle" textLength="14.4" lengthAdjust="spacingAndGlyphs">V</text></svg><svg style="left:792px;top:153.4px" width="14.6" height="15" viewBox="0 0 14.6 15"><rect x="1" y="3.0" width="12" height="0.8" fill="#c4c4c4"/><rect x="1" y="4.5" width="12" height="0.8" fill="#c4c4c4"/><rect x="1" y="6.0" width="12" height="0.8" fill="#c4c4c4"/><rect x="1" y="7.5" width="12" height="0.8" fill="#c4c4c4"/><rect x="1" y="9.0" width="12" height="0.8" fill="#c4c4c4"/><rect x="1" y="10.5" width="12" height="0.8" fill="#c4c4c4"/><rect x="1" y="12.0" width="12" height="0.8" fill="#c4c4c4"/><text x="7.2" y="14.2" font-family="'Liberation Sans',sans-serif" font-size="19" font-weight="700" fill="#ababab" text-anchor="middle" textLength="13" lengthAdjust="spacingAndGlyphs">G</text></svg><svg style="left:824px;top:152.8px" width="16.4" height="16" viewBox="0 0 16.4 16"><rect x="0.7" y="0.7" width="15" height="14.6" rx="1" fill="#fff" stroke="#5353c4" stroke-width="1.4"/><text x="2.2" y="5.6" font-family="'Liberation Sans',sans-serif" font-size="4.6" font-weight="700" fill="#222">25</text><text x="2.2" y="10" font-family="'Liberation Sans',sans-serif" font-size="4.6" font-weight="700" fill="#222">74</text><text x="2.2" y="14.4" font-family="'Liberation Sans',sans-serif" font-size="4.6" font-weight="700" fill="#222">16</text><text x="11.4" y="13" font-family="'Liberation Sans',sans-serif" font-size="12" font-weight="700" fill="#a018b8" text-anchor="middle">?</text></svg><svg style="left:849px;top:153.6px" width="16.4" height="14.6" viewBox="0 0 16.4 14.6"><rect x="0.8" y="0.8" width="14.8" height="13" rx="2.4" fill="#f4f4f4" stroke="#5c5c5c" stroke-width="1.5"/><text x="8.2" y="7.6" font-family="'Liberation Mono',monospace" font-size="7" font-weight="700" fill="#b0641a" text-anchor="middle">ID</text><rect x="2.6" y="9" width="1.2" height="3.6" fill="#222"/><rect x="4.1" y="9" width="0.9" height="3.6" fill="#222"/><rect x="5.6" y="9" width="0.9" height="3.6" fill="#222"/><rect x="7.1" y="9" width="1.2" height="3.6" fill="#222"/><rect x="8.6" y="9" width="0.9" height="3.6" fill="#222"/><rect x="10.1" y="9" width="0.9" height="3.6" fill="#222"/><rect x="11.6" y="9" width="1.2" height="3.6" fill="#222"/><rect x="13.1" y="9" width="0.9" height="3.6" fill="#222"/></svg><svg style="left:881.8px;top:152.8px" width="16.6" height="16" viewBox="0 0 16.6 16"><path d="M5.2 4.8 Q6 0.4 10 0.4 Q14 0.4 15.2 4.8Z" fill="#141414"/><path d="M5.2 4.4 L15.6 4.4 L15 10.4 L5.2 10.4Z" fill="#f2ee14"/><path d="M0.8 10.4 L0.8 7 Q1.2 4.2 5.2 4.2 L5.2 10.4Z" fill="#8a4a1c"/><rect x="7.0" y="6" width="1" height="3" fill="#7a7a10"/><rect x="9.4" y="6" width="1" height="3" fill="#7a7a10"/><rect x="11.8" y="6" width="1" height="3" fill="#7a7a10"/><rect x="0.8" y="10.2" width="14.6" height="1.2" fill="#333"/><circle cx="3.2" cy="11.8" r="1.7" fill="#111"/><circle cx="10.6" cy="11.8" r="1.7" fill="#111"/><circle cx="13.8" cy="11.8" r="1.7" fill="#111"/><circle cx="3.2" cy="11.8" r="0.6" fill="#ccc"/><circle cx="10.6" cy="11.8" r="0.6" fill="#ccc"/><circle cx="13.8" cy="11.8" r="0.6" fill="#ccc"/><rect x="1.2" y="13.4" width="14" height="1.3" fill="#3c3cf0"/><path d="M2.4 14.6 L4.4 14.6 L3 16 L1.8 16Z M12 14.6 L14 14.6 L14.8 16 L13.4 16Z" fill="#3c3cf0"/></svg><svg style="left:906.8px;top:152.8px" width="16.6" height="16" viewBox="0 0 16.6 16"><path d="M5.2 4.4 L15.6 4.4 L15 10.4 L5.2 10.4Z" fill="#f2ee14"/><path d="M0.8 10.4 L0.8 7 Q1.2 4.2 5.2 4.2 L5.2 10.4Z" fill="#f2ee14"/><rect x="7.0" y="6" width="1" height="3" fill="#7a7a10"/><rect x="9.4" y="6" width="1" height="3" fill="#7a7a10"/><rect x="11.8" y="6" width="1" height="3" fill="#7a7a10"/><rect x="0.8" y="10.2" width="14.6" height="1.2" fill="#333"/><circle cx="3.2" cy="11.8" r="1.7" fill="#111"/><circle cx="10.6" cy="11.8" r="1.7" fill="#111"/><circle cx="13.8" cy="11.8" r="1.7" fill="#111"/><circle cx="3.2" cy="11.8" r="0.6" fill="#ccc"/><circle cx="10.6" cy="11.8" r="0.6" fill="#ccc"/><circle cx="13.8" cy="11.8" r="0.6" fill="#ccc"/><rect x="1.2" y="13.4" width="14" height="1.3" fill="#3c3cf0"/><path d="M2.4 14.6 L4.4 14.6 L3 16 L1.8 16Z M12 14.6 L14 14.6 L14.8 16 L13.4 16Z" fill="#3c3cf0"/></svg><svg style="left:931.9px;top:152.8px" width="16.6" height="16" viewBox="0 0 16.6 16"><rect x="0.2" y="0.4" width="16.2" height="15.4" fill="#8e9c1c"/><path d="M5.2 4.8 Q6 0.4 10 0.4 Q14 0.4 15.2 4.8Z" fill="#141414"/><path d="M5.2 4.4 L15.6 4.4 L15 10.4 L5.2 10.4Z" fill="#f2ee14"/><path d="M0.8 10.4 L0.8 7 Q1.2 4.2 5.2 4.2 L5.2 10.4Z" fill="#8a4a1c"/><rect x="7.0" y="6" width="1" height="3" fill="#7a7a10"/><rect x="9.4" y="6" width="1" height="3" fill="#7a7a10"/><rect x="11.8" y="6" width="1" height="3" fill="#7a7a10"/><rect x="0.8" y="10.2" width="14.6" height="1.2" fill="#333"/><circle cx="3.2" cy="11.8" r="1.7" fill="#111"/><circle cx="10.6" cy="11.8" r="1.7" fill="#111"/><circle cx="13.8" cy="11.8" r="1.7" fill="#111"/><circle cx="3.2" cy="11.8" r="0.6" fill="#ccc"/><circle cx="10.6" cy="11.8" r="0.6" fill="#ccc"/><circle cx="13.8" cy="11.8" r="0.6" fill="#ccc"/><rect x="1.2" y="13.6" width="14" height="1.6" fill="#2c50b0"/><path d="M0.4 15.6 L15.8 0.4" stroke="#fff" stroke-width="1.5"/></svg><svg style="left:957px;top:152.8px" width="16.6" height="16" viewBox="0 0 16.6 16"><rect x="0.2" y="0.4" width="16.2" height="15.4" fill="#8e9c1c"/><path d="M5.2 4.4 L15.6 4.4 L15 10.4 L5.2 10.4Z" fill="#f2ee14"/><path d="M0.8 10.4 L0.8 7 Q1.2 4.2 5.2 4.2 L5.2 10.4Z" fill="#f2ee14"/><rect x="7.0" y="6" width="1" height="3" fill="#7a7a10"/><rect x="9.4" y="6" width="1" height="3" fill="#7a7a10"/><rect x="11.8" y="6" width="1" height="3" fill="#7a7a10"/><rect x="0.8" y="10.2" width="14.6" height="1.2" fill="#333"/><circle cx="3.2" cy="11.8" r="1.7" fill="#111"/><circle cx="10.6" cy="11.8" r="1.7" fill="#111"/><circle cx="13.8" cy="11.8" r="1.7" fill="#111"/><circle cx="3.2" cy="11.8" r="0.6" fill="#ccc"/><circle cx="10.6" cy="11.8" r="0.6" fill="#ccc"/><circle cx="13.8" cy="11.8" r="0.6" fill="#ccc"/><rect x="1.2" y="13.6" width="14" height="1.6" fill="#2c50b0"/><path d="M0.4 15.6 L15.8 0.4" stroke="#fff" stroke-width="1.5"/></svg><svg style="left:983.6px;top:152.4px" width="14.6" height="16.4" viewBox="0 0 14.6 16.4"><path d="M1.2 0.8 L9.6 0.8 L13.4 4.6 L13.4 15.4 L1.2 15.4Z" fill="#fbfbfb" stroke="#4a4a4a" stroke-width="1.2"/><path d="M9.4 0.8 L9.4 4.8 L13.4 4.8" fill="none" stroke="#4a4a4a" stroke-width="1"/><rect x="5.6" y="1.2" width="1.6" height="5" fill="#9a9a9a"/><path d="M4.6 12.4 L4.6 10.6 L6.4 10.6 L7.4 8.4 L8.6 10.6 L10.4 10 L10.4 12.4Z" fill="#a222b6"/></svg><svg style="left:1015px;top:152.6px" width="16.6" height="16.2" viewBox="0 0 16.6 16.2"><path d="M5 1.4 L14.8 0.6 L14.2 3.6 L4.6 3.6Z" fill="#22c82a"/><rect x="5" y="3.8" width="10" height="1.6" fill="#111"/><rect x="4.4" y="5.8" width="10.6" height="1.2" fill="#3c3cf0"/><path d="M1.6 9.6 L11.8 8.6 L11.4 12 L1.6 12Z" fill="#f2e814"/><rect x="2" y="12.2" width="10" height="1.6" fill="#111"/><rect x="1.6" y="14.2" width="10.6" height="1.2" fill="#3c3cf0"/><path d="M3.4 3 Q0.6 4.6 2 7.6 M14 13.4 Q16.4 11.4 15 8.4" fill="none" stroke="#e81818" stroke-width="1.3"/><path d="M0.8 6.4 L3.6 6.8 L2.2 9Z M16.2 9.6 L13.6 9.2 L15 7Z" fill="#e81818"/></svg><svg style="left:1040.6px;top:152.6px" width="16" height="16.2" viewBox="0 0 16 16.2"><path d="M5.4 1.2 L15 0.4 L14 3.4 L4.8 3.4Z" fill="#22c82a"/><rect x="5" y="3.6" width="8.6" height="1.5" fill="#111"/><path d="M3.6 5.6 L13.6 5 L12.6 8 L3 8Z" fill="#e81c1c"/><rect x="3.4" y="8.2" width="8.6" height="1.5" fill="#111"/><path d="M1.2 10.4 L11.6 9.8 L10.8 13 L0.8 13Z" fill="#f2e814"/><rect x="1.4" y="13.2" width="3" height="2.4" fill="#111"/><rect x="7" y="13.2" width="3.6" height="2.4" fill="#111"/></svg><svg style="left:1072.8px;top:153.6px" width="16.8" height="15" viewBox="0 0 16.8 15"><path d="M8.6 4.6 L9.6 0.6 L13.4 0.6 L14.4 4.6Z" fill="#111"/><rect x="7.6" y="4.4" width="8" height="1.2" fill="#111"/><path d="M6 5.6 L16.4 5.6 L15.8 10.6 L6 10.6Z" fill="#f2ee14"/><path d="M0.8 10.6 L1.2 7.2 Q1.8 5.4 6 5.4 L6 10.6Z" fill="#f2ee14"/><rect x="2" y="6.6" width="2.4" height="1.8" fill="#8a8a20"/><rect x="7.8" y="7" width="1" height="2.6" fill="#6a6a10"/><rect x="10.0" y="7" width="1" height="2.6" fill="#6a6a10"/><rect x="12.2" y="7" width="1" height="2.6" fill="#6a6a10"/><rect x="14.4" y="7" width="1" height="2.6" fill="#6a6a10"/><rect x="0.8" y="10.4" width="15.4" height="1.1" fill="#333"/><circle cx="3.2" cy="12.6" r="1.9" fill="#111"/><circle cx="10.4" cy="12.6" r="1.9" fill="#111"/><circle cx="14.2" cy="12.6" r="1.9" fill="#111"/><circle cx="3.2" cy="12.6" r="0.7" fill="#ddd"/><circle cx="10.4" cy="12.6" r="0.7" fill="#ddd"/><circle cx="14.2" cy="12.6" r="0.7" fill="#ddd"/></svg><svg style="left:1105.6px;top:153px" width="16.8" height="15.6" viewBox="0 0 16.8 15.6"><path d="M4.2 6.6 L4.2 0.8 L9.6 0.8 L12.4 3.6 L12.4 6.6" fill="#fafafa" stroke="#3e3e3e" stroke-width="1.2"/><path d="M6 3h2M6 5h4.6" stroke="#555" stroke-width="1"/><rect x="0.8" y="6.6" width="15" height="7.8" rx="1.6" fill="#f0f0f0" stroke="#3e3e3e" stroke-width="1.3"/><rect x="2.4" y="10.4" width="11.8" height="1.2" fill="#3e3e3e"/><rect x="12.8" y="8" width="1.4" height="1.2" fill="#e05050"/></svg><svg style="left:1131px;top:152.8px" width="15.4" height="16" viewBox="0 0 15.4 16"><rect x="6" y="1.6" width="8.6" height="8.6" fill="#e8e8e8" stroke="#555" stroke-width="1.2"/><rect x="8.4" y="3.8" width="4" height="4.2" fill="#bdbdbd" stroke="#666" stroke-width="0.7"/><path d="M1.6 8 L1.6 15.2 L8.6 15.2 L8.6 9" fill="#8c8cf4" stroke="#4a4a88" stroke-width="1"/><circle cx="5" cy="5" r="3.9" fill="#e4e8f2" stroke="#5a5ad0" stroke-width="1.1"/><path d="M8 8 L12.4 12" stroke="#c8b020" stroke-width="1.6"/><path d="M9 9.2 L12.8 12.8" stroke="#333" stroke-width="0.8"/></svg><svg style="left:1157px;top:152.8px" width="15.6" height="14.8" viewBox="0 0 15.6 14.8"><rect x="0" y="0" width="15.6" height="14.8" fill="#fdfdfd"/><path d="M11.6 4.6 L14.4 0.4 L14 5.6Z" fill="#3a46e0"/><path d="M8.6 1.4 L11.2 4.4" stroke="#8a8a9a" stroke-width="0.9"/><path d="M9.8 7.8 L12.6 6.6 L11.4 8.8Z" fill="#d8b020"/><path d="M2 10.6h4" stroke="#e4e4ec" stroke-width="0.8"/></svg>
<div style="left:568px;top:175.4px;width:44px;height:20.599999999999994px;background:#fff;border:1px solid #d0d0d0;box-sizing:border-box;border-bottom:none;"></div>
<div style="left:611.7px;top:177.4px;width:44.299999999999955px;height:17.599999999999994px;background:#f3f3f3;border:1px solid #d4d4d4;box-sizing:border-box;border-bottom:none;"></div>
<span class="t" style="left:578.70px;top:180.00px;font-size:10.4px;letter-spacing:-0.265px;color:#111;"><u>1</u> Main</span>
<span class="t" style="left:618.30px;top:182.00px;font-size:10.4px;letter-spacing:-0.256px;color:#111;"><u>2</u> Prices</span>
<div style="left:574px;top:201px;width:376px;height:340px;border:1px solid #a6a6a6;box-sizing:border-box;"></div>
<div style="left:953px;top:201px;width:221px;height:340px;border:1px solid #a6a6a6;box-sizing:border-box;"></div>
<div style="left:957px;top:285px;width:212px;height:153px;border:1px solid #a6a6a6;box-sizing:border-box;"></div>
<span class="t" style="left:585.60px;top:213.00px;font-size:10.5px;letter-spacing:-0.260px;color:#111;">Vehicle:</span>
<div style="left:649px;top:208px;width:77px;height:20px;background:#fff;border:1px solid #7c7c7c;box-sizing:border-box;box-shadow:0 1px 0 #c6c6c6,1px 0 0 #dcdcdc;"></div>
<svg style="left:712.4px;top:215px" width="8" height="6" viewBox="0 0 8 6"><path d="M0.6 1.2 L7.4 1.2 L4 4.9Z" fill="#111"/></svg>
<span class="t" style="left:651.40px;top:212.00px;font-size:10.5px;letter-spacing:-0.621px;color:#111;">OV101</span>
<div style="left:727px;top:208px;width:203px;height:20px;background:#e7e7e7;border:1px solid #7c7c7c;box-sizing:border-box;box-shadow:0 1px 0 #c6c6c6,1px 0 0 #dcdcdc;"></div>
<span class="t" style="left:729.60px;top:212.00px;font-size:10.5px;letter-spacing:-0.552px;color:#111;">OVERBEE HAULING #101</span>
<span class="t" style="left:585.60px;top:235.00px;font-size:10.5px;letter-spacing:-0.039px;color:#111;">Carrier:</span>
<div style="left:649px;top:230px;width:77px;height:20px;background:#fff;border:1px solid #7c7c7c;box-sizing:border-box;box-shadow:0 1px 0 #c6c6c6,1px 0 0 #dcdcdc;"></div>
<svg style="left:712.4px;top:237px" width="8" height="6" viewBox="0 0 8 6"><path d="M0.6 1.2 L7.4 1.2 L4 4.9Z" fill="#111"/></svg>
<span class="t" style="left:651.40px;top:234.00px;font-size:10.5px;letter-spacing:-1.389px;color:#111;">RGB</span>
<div style="left:727px;top:230px;width:203px;height:20px;background:#e7e7e7;border:1px solid #7c7c7c;box-sizing:border-box;box-shadow:0 1px 0 #c6c6c6,1px 0 0 #dcdcdc;"></div>
<span class="t" style="left:729.60px;top:234.00px;font-size:10.5px;letter-spacing:-0.581px;color:#111;">RICH G BROWN AND SONS</span>
<span class="t" style="left:585.60px;top:266.00px;font-size:10.5px;letter-spacing:-0.153px;color:#111;">Dispatch:</span>
<div style="left:649px;top:261px;width:77px;height:19px;background:#fff;border:1px solid #7c7c7c;box-sizing:border-box;box-shadow:0 1px 0 #c6c6c6,1px 0 0 #dcdcdc;"></div>
<svg style="left:712.4px;top:268px" width="8" height="6" viewBox="0 0 8 6"><path d="M0.6 1.2 L7.4 1.2 L4 4.9Z" fill="#111"/></svg>
<span class="t" style="left:651.40px;top:265.00px;font-size:10.5px;color:#111;">0</span>
<span class="t" style="left:585.60px;top:287.00px;font-size:10.5px;letter-spacing:-0.115px;color:#111;">Customer:</span>
<div style="left:649px;top:282px;width:77px;height:20px;background:#fff;border:1px solid #7c7c7c;box-sizing:border-box;box-shadow:0 1px 0 #c6c6c6,1px 0 0 #dcdcdc;"></div>
<svg style="left:712.4px;top:289px" width="8" height="6" viewBox="0 0 8 6"><path d="M0.6 1.2 L7.4 1.2 L4 4.9Z" fill="#111"/></svg>
<span class="t" style="left:651.40px;top:286.00px;font-size:10.5px;letter-spacing:-0.190px;color:#111;">0075</span>
<div style="left:727px;top:282px;width:203px;height:20px;background:#e7e7e7;border:1px solid #7c7c7c;box-sizing:border-box;box-shadow:0 1px 0 #c6c6c6,1px 0 0 #dcdcdc;"></div>
<span class="t" style="left:729.60px;top:286.00px;font-size:10.5px;letter-spacing:-0.467px;color:#111;">A &amp; K PAVING COMPANY</span>
<span class="t" style="left:585.60px;top:308.00px;font-size:10.5px;letter-spacing:0.039px;color:#111;">Order:</span>
<div style="left:649px;top:303px;width:77px;height:20px;background:#fff;border:1px solid #3f8fe6;box-sizing:border-box;box-shadow:0 1px 0 #c6c6c6,1px 0 0 #dcdcdc;"></div>
<svg style="left:712.4px;top:310px" width="8" height="6" viewBox="0 0 8 6"><path d="M0.6 1.2 L7.4 1.2 L4 4.9Z" fill="#111"/></svg>
<span class="t" style="left:651.40px;top:307.00px;font-size:10.5px;letter-spacing:-0.097px;color:#111;">02-51235</span>
<div style="left:727px;top:303px;width:203px;height:20px;background:#fff;border:1px solid #7c7c7c;box-sizing:border-box;box-shadow:0 1px 0 #c6c6c6,1px 0 0 #dcdcdc;"></div>
<span class="t" style="left:729.60px;top:307.00px;font-size:10.5px;letter-spacing:-0.543px;color:#111;">SANDY HILLS SUBDIVISION</span>
<div style="left:727px;top:324px;width:203px;height:20px;background:#fff;border:1px solid #7c7c7c;box-sizing:border-box;box-shadow:0 1px 0 #c6c6c6,1px 0 0 #dcdcdc;"></div>
<div style="left:727px;top:346px;width:203px;height:19px;background:#fff;border:1px solid #7c7c7c;box-sizing:border-box;box-shadow:0 1px 0 #c6c6c6,1px 0 0 #dcdcdc;"></div>
<span class="t" style="left:585.60px;top:372.00px;font-size:10.5px;letter-spacing:0.304px;color:#111;">P.O.:</span>
<div style="left:727px;top:367px;width:203px;height:20px;background:#fff;border:1px solid #7c7c7c;box-sizing:border-box;box-shadow:0 1px 0 #c6c6c6,1px 0 0 #dcdcdc;"></div>
<span class="t" style="left:729.60px;top:371.00px;font-size:10.5px;letter-spacing:-0.097px;color:#111;">20045-16</span>
<span class="t" style="left:585.60px;top:403.00px;font-size:10.5px;letter-spacing:-0.064px;color:#111;">Product:</span>
<div style="left:649px;top:398px;width:77px;height:20px;background:#fff;border:1px solid #7c7c7c;box-sizing:border-box;box-shadow:0 1px 0 #c6c6c6,1px 0 0 #dcdcdc;"></div>
<svg style="left:712.4px;top:405px" width="8" height="6" viewBox="0 0 8 6"><path d="M0.6 1.2 L7.4 1.2 L4 4.9Z" fill="#111"/></svg>
<span class="t" style="left:651.40px;top:402.00px;font-size:10.5px;letter-spacing:-0.744px;color:#111;">21</span>
<div style="left:727px;top:398px;width:203px;height:20px;background:#e7e7e7;border:1px solid #7c7c7c;box-sizing:border-box;box-shadow:0 1px 0 #c6c6c6,1px 0 0 #dcdcdc;"></div>
<span class="t" style="left:729.60px;top:402.00px;font-size:10.5px;letter-spacing:-0.193px;color:#111;">3/8&quot; A CLEAN</span>
<span class="t" style="left:585.60px;top:425.00px;font-size:10.5px;letter-spacing:-0.213px;color:#111;">Mix:</span>
<div style="left:649px;top:420px;width:77px;height:19px;background:#fff;border:1px solid #7c7c7c;box-sizing:border-box;box-shadow:0 1px 0 #c6c6c6,1px 0 0 #dcdcdc;"></div>
<svg style="left:712.4px;top:427px" width="8" height="6" viewBox="0 0 8 6"><path d="M0.6 1.2 L7.4 1.2 L4 4.9Z" fill="#111"/></svg>
<div style="left:727px;top:420px;width:203px;height:19px;background:#e7e7e7;border:1px solid #7c7c7c;box-sizing:border-box;box-shadow:0 1px 0 #c6c6c6,1px 0 0 #dcdcdc;"></div>
<svg style="left:651px;top:306px" width="6" height="14" viewBox="0 0 6 14"><path d="M0.5 0.8 Q2.6 1 2.8 3 L2.8 11 Q2.6 13 0.5 13.2" fill="none" stroke="#222" stroke-width="1"/></svg>
<div style="left:586px;top:253.7px;width:342px;height:1.0px;background:#a0a0a0;"></div>
<div style="left:586px;top:254.7px;width:342px;height:1.0px;background:#f6f6f6;"></div>
<div style="left:586px;top:390.8px;width:342px;height:1.0px;background:#a0a0a0;"></div>
<div style="left:586px;top:391.8px;width:342px;height:1.0px;background:#f6f6f6;"></div>
<div style="left:586px;top:446.0px;width:342px;height:1.0px;background:#a0a0a0;"></div>
<div style="left:586px;top:447.0px;width:342px;height:1.0px;background:#f6f6f6;"></div>
<span class="t" style="left:585.60px;top:455.00px;font-size:10.5px;letter-spacing:-0.152px;color:#111;">Zone:</span>
<div style="left:649px;top:450px;width:77px;height:20px;background:#fff;border:1px solid #7c7c7c;box-sizing:border-box;box-shadow:0 1px 0 #c6c6c6,1px 0 0 #dcdcdc;"></div>
<svg style="left:712.4px;top:457px" width="8" height="6" viewBox="0 0 8 6"><path d="M0.6 1.2 L7.4 1.2 L4 4.9Z" fill="#111"/></svg>
<span class="t" style="left:651.40px;top:454.00px;font-size:10.5px;letter-spacing:-0.334px;color:#111;">AR-2</span>
<span class="t" style="left:754.10px;top:455.00px;font-size:10.5px;letter-spacing:-0.132px;color:#111;">Pickup or Deliver:</span>
<div style="left:847px;top:450px;width:82px;height:20px;background:#fff;border:1px solid #7c7c7c;box-sizing:border-box;box-shadow:0 1px 0 #c6c6c6,1px 0 0 #dcdcdc;"></div>
<svg style="left:914.8px;top:457px" width="10" height="7" viewBox="0 0 10 7"><path d="M1.2 1.4 L5 5.2 L8.8 1.4" fill="none" stroke="#555" stroke-width="0.9"/></svg>
<span class="t" style="left:848.90px;top:454.00px;font-size:10.5px;letter-spacing:-0.170px;color:#111;">Deliver</span>
<span class="t" style="left:585.60px;top:477.00px;font-size:10.5px;letter-spacing:-0.112px;color:#111;">Deliver:</span>
<div style="left:649px;top:472px;width:281px;height:19px;background:#fff;border:1px solid #7c7c7c;box-sizing:border-box;box-shadow:0 1px 0 #c6c6c6,1px 0 0 #dcdcdc;"></div>
<span class="t" style="left:651.40px;top:476.00px;font-size:10.5px;letter-spacing:0.036px;color:#111;">Follow detour through the construction site</span>
<div style="left:649px;top:493px;width:281px;height:20px;background:#fff;border:1px solid #7c7c7c;box-sizing:border-box;box-shadow:0 1px 0 #c6c6c6,1px 0 0 #dcdcdc;"></div>
<div style="left:649px;top:514px;width:281px;height:20px;background:#fff;border:1px solid #7c7c7c;box-sizing:border-box;box-shadow:0 1px 0 #c6c6c6,1px 0 0 #dcdcdc;"></div>
<span class="t" style="left:965.70px;top:213.00px;font-size:10.5px;letter-spacing:-0.214px;color:#111;">Ticket Number:</span>
<div style="left:1065px;top:208px;width:97px;height:20px;background:#fff;border:1px solid #7c7c7c;box-sizing:border-box;box-shadow:0 1px 0 #c6c6c6,1px 0 0 #dcdcdc;"></div>
<svg style="left:1147.5px;top:215px" width="8" height="6" viewBox="0 0 8 6"><path d="M0.6 1.2 L7.4 1.2 L4 4.9Z" fill="#111"/></svg>
<span class="t" style="left:1067.40px;top:212.00px;font-size:10.5px;letter-spacing:-0.258px;color:#111;">908681</span>
<div style="left:966.5px;top:232.9px;width:193.5px;height:1.0px;background:#a0a0a0;"></div>
<div style="left:966.5px;top:233.9px;width:193.5px;height:1.0px;background:#f6f6f6;"></div>
<span class="t" style="left:964.70px;top:245.00px;font-size:10.5px;letter-spacing:0.098px;color:#111;">Date:</span>
<div style="left:1016px;top:239px;width:77px;height:20px;background:#e7e7e7;border:1px solid #7c7c7c;box-sizing:border-box;box-shadow:0 1px 0 #c6c6c6,1px 0 0 #dcdcdc;"></div>
<svg style="left:1079.3px;top:246px" width="10" height="7" viewBox="0 0 10 7"><path d="M1.2 1.4 L5 5.2 L8.8 1.4" fill="none" stroke="#555" stroke-width="0.9"/></svg>
<span class="t" style="left:1017.70px;top:244.00px;font-size:10.5px;letter-spacing:0.176px;color:#111;">9/18/2023</span>
<div style="left:1093px;top:239px;width:72px;height:20px;background:#e7e7e7;border:1px solid #7c7c7c;box-sizing:border-box;box-shadow:0 1px 0 #c6c6c6,1px 0 0 #dcdcdc;"></div>
<span class="t" style="left:1096.00px;top:244.00px;font-size:10.5px;letter-spacing:-0.012px;color:#111;">11:22 AM</span>
<span class="t" style="left:964.70px;top:265.00px;font-size:10.5px;letter-spacing:-0.103px;color:#111;">Location:</span>
<div style="left:1016px;top:260px;width:77px;height:21px;background:#fff;border:1px solid #7c7c7c;box-sizing:border-box;box-shadow:0 1px 0 #c6c6c6,1px 0 0 #dcdcdc;"></div>
<svg style="left:1079px;top:267.5px" width="8" height="6" viewBox="0 0 8 6"><path d="M0.6 1.2 L7.4 1.2 L4 4.9Z" fill="#111"/></svg>
<span class="t" style="left:1017.70px;top:265.00px;font-size:10.5px;color:#111;">1</span>
<div style="left:1093px;top:260px;width:72px;height:21px;background:#e7e7e7;border:1px solid #7c7c7c;box-sizing:border-box;box-shadow:0 1px 0 #c6c6c6,1px 0 0 #dcdcdc;"></div>
<div style="left:1094px;top:261px;width:70px;height:19px;overflow:hidden;"><span class="t" style="left:1px;top:3.8px;font-size:10.5px;letter-spacing:-0.12px;color:#111">NORTH HAMPTON PLANT</span></div>
<div style="left:982px;top:291px;width:166px;height:20px;background:#e7e7e7;border:1px solid #7c7c7c;box-sizing:border-box;box-shadow:0 1px 0 #c6c6c6,1px 0 0 #dcdcdc;"></div>
<span class="t" style="left:987.00px;top:296.00px;font-size:10.5px;letter-spacing:-0.433px;color:#111;">Scale 1</span>
<div style="left:982px;top:313px;width:96px;height:23px;background:#e7e7e7;border:1px solid #7c7c7c;box-sizing:border-box;box-shadow:0 1px 0 #c6c6c6,1px 0 0 #dcdcdc;"></div>
<span class="t" style="left:1011.80px;top:318.00px;font-size:12.6px;letter-spacing:0.594px;color:#e01818;font-weight:700;">74160</span>
<div style="left:1079px;top:313px;width:34px;height:23px;background:#e7e7e7;border:1px solid #7c7c7c;box-sizing:border-box;box-shadow:0 1px 0 #c6c6c6,1px 0 0 #dcdcdc;"></div>
<span class="t" style="left:1081.60px;top:318.00px;font-size:12.6px;letter-spacing:-0.202px;color:#111;font-weight:700;">lb</span>
<div style="left:1114px;top:313px;width:34px;height:23px;background:#e7e7e7;border:1px solid #7c7c7c;box-sizing:border-box;box-shadow:0 1px 0 #c6c6c6,1px 0 0 #dcdcdc;"></div>
<span class="t" style="left:981.30px;top:344.00px;font-size:10.5px;letter-spacing:-0.220px;color:#111;">Gross:</span>
<div style="left:1030px;top:339px;width:63px;height:20px;background:#e7e7e7;border:1px solid #7c7c7c;box-sizing:border-box;box-shadow:0 1px 0 #c6c6c6,1px 0 0 #dcdcdc;"></div>
<span class="t" style="left:1058.70px;top:343.00px;font-size:10.5px;letter-spacing:0.019px;color:#111;">74160</span>
<span class="t" style="left:981.30px;top:365.00px;font-size:10.5px;letter-spacing:0.251px;color:#111;">Tare:</span>
<div style="left:1030px;top:360px;width:63px;height:20px;background:#fff;border:1px solid #7c7c7c;box-sizing:border-box;box-shadow:0 1px 0 #c6c6c6,1px 0 0 #dcdcdc;"></div>
<span class="t" style="left:1058.70px;top:364.00px;font-size:10.5px;letter-spacing:0.019px;color:#2f9e2f;">24100</span>
<span class="t" style="left:981.30px;top:387.00px;font-size:10.5px;letter-spacing:0.109px;color:#111;">Net:</span>
<div style="left:1030px;top:382px;width:63px;height:20px;background:#e7e7e7;border:1px solid #7c7c7c;box-sizing:border-box;box-shadow:0 1px 0 #c6c6c6,1px 0 0 #dcdcdc;"></div>
<span class="t" style="left:1058.70px;top:386.00px;font-size:10.5px;letter-spacing:0.019px;color:#111;">50060</span>
<span class="t" style="left:981.30px;top:417.00px;font-size:10.5px;letter-spacing:0.359px;color:#111;">Qty:</span>
<div style="left:1030px;top:412px;width:63px;height:21px;background:#e7e7e7;border:1px solid #7c7c7c;box-sizing:border-box;box-shadow:0 1px 0 #c6c6c6,1px 0 0 #dcdcdc;"></div>
<span class="t" style="left:1060.50px;top:416.00px;font-size:10.5px;letter-spacing:0.244px;color:#111;">25.03</span>
<div style="left:1094px;top:412px;width:53px;height:21px;background:#e7e7e7;border:1px solid #7c7c7c;box-sizing:border-box;box-shadow:0 1px 0 #c6c6c6,1px 0 0 #dcdcdc;"></div>
<span class="t" style="left:1096.90px;top:416.00px;font-size:10.5px;letter-spacing:-0.113px;color:#111;">Ton</span>
<span class="t" style="left:965.20px;top:455.00px;font-size:10.5px;letter-spacing:-0.056px;color:#111;">Today Loads:</span>
<div style="left:1044px;top:450px;width:73px;height:20px;background:#e7e7e7;border:1px solid #7c7c7c;box-sizing:border-box;box-shadow:0 1px 0 #c6c6c6,1px 0 0 #dcdcdc;"></div>
<span class="t" style="left:1106.70px;top:454.00px;font-size:10.5px;color:#111;">1</span>
<span class="t" style="left:965.20px;top:477.00px;font-size:10.5px;letter-spacing:0.210px;color:#111;">Today Qty:</span>
<div style="left:1044px;top:472px;width:73px;height:19px;background:#e7e7e7;border:1px solid #7c7c7c;box-sizing:border-box;box-shadow:0 1px 0 #c6c6c6,1px 0 0 #dcdcdc;"></div>
<span class="t" style="left:1084.30px;top:476.00px;font-size:10.5px;letter-spacing:0.224px;color:#111;">25.03</span>
<span class="t" style="left:965.20px;top:498.00px;font-size:10.5px;letter-spacing:0.148px;color:#111;">Order Qty:</span>
<div style="left:1044px;top:493px;width:73px;height:20px;background:#e7e7e7;border:1px solid #7c7c7c;box-sizing:border-box;box-shadow:0 1px 0 #c6c6c6,1px 0 0 #dcdcdc;"></div>
<span class="t" style="left:1067.00px;top:497.00px;font-size:10.5px;letter-spacing:0.113px;color:#111;">53000.00</span>
<span class="t" style="left:965.20px;top:520.00px;font-size:10.5px;letter-spacing:0.058px;color:#111;">Actual Qty:</span>
<div style="left:1044px;top:515px;width:73px;height:19px;background:#e7e7e7;border:1px solid #7c7c7c;box-sizing:border-box;box-shadow:0 1px 0 #c6c6c6,1px 0 0 #dcdcdc;"></div>
<span class="t" style="left:1078.60px;top:519.00px;font-size:10.5px;letter-spacing:0.163px;color:#111;">631.13</span>
<div style="left:1117px;top:472px;width:48px;height:19px;background:#e7e7e7;border:1px solid #7c7c7c;box-sizing:border-box;box-shadow:0 1px 0 #c6c6c6,1px 0 0 #dcdcdc;"></div>
<span class="t" style="left:1119.80px;top:476.00px;font-size:10.5px;letter-spacing:0.021px;color:#111;">Ton</span>
<div style="left:568px;top:563.5px;width:648px;height:17.0px;background:#f4f5f5;border-top:1px solid #dcdcdc;"></div>
<div style="left:774px;top:566px;width:1px;height:14px;background:#dadada;"></div>
<div style="left:980px;top:566px;width:1px;height:14px;background:#dadada;"></div>
<span class="t" style="left:569.70px;top:570.00px;font-size:11.4px;letter-spacing:0.115px;color:#111;">New ticket</span>
<svg style="left:1206px;top:571px" width="10" height="10" viewBox="0 0 10 10"><g fill="#b0b0b0"><rect x="7" y="1" width="1.4" height="1.4"/><rect x="7" y="4" width="1.4" height="1.4"/><rect x="4" y="4" width="1.4" height="1.4"/><rect x="7" y="7" width="1.4" height="1.4"/><rect x="4" y="7" width="1.4" height="1.4"/><rect x="1" y="7" width="1.4" height="1.4"/></g></svg>
<div style="left:59px;top:642px;width:1174px;height:35px;background:linear-gradient(90deg,#22323f 0%,#20303f 50%,#1c2a41 100%);"></div>
<div style="left:103px;top:642px;width:315.7px;height:35px;background:#f3f3f3;"></div>
<svg style="left:73px;top:652px" width="16" height="15" viewBox="0 0 16 15"><g fill="#fff"><path d="M0 2.2 L6.6 1.2 L6.6 7 L0 7Z"/><path d="M7.6 1.05 L16 0 L16 7 L7.6 7Z"/><path d="M0 8 L6.6 8 L6.6 13.8 L0 12.8Z"/><path d="M7.6 8 L16 8 L16 15 L7.6 13.95Z"/></g></svg>
<svg style="left:113px;top:651px" width="17" height="17" viewBox="0 0 17 17"><circle cx="10.3" cy="6.6" r="4.6" fill="none" stroke="#222" stroke-width="1.3"/><path d="M7 10 L1.4 15.4" stroke="#222" stroke-width="1.4"/></svg>
<span class="t" style="left:140.00px;top:654.00px;font-size:13.3px;letter-spacing:0.162px;color:#2b2b2b;">Type here to search</span>
<svg style="left:432px;top:651px" width="18" height="18" viewBox="0 0 18 18"><circle cx="8.7" cy="8.6" r="6" fill="none" stroke="#fff" stroke-width="2"/></svg>
<svg style="left:476px;top:652px" width="18" height="15" viewBox="0 0 18 15"><g fill="none" stroke="#d8dde2" stroke-width="1.1"><rect x="2.2" y="3" width="8.6" height="8.4"/><path d="M1.2 0.9h10.6M1.2 13.6h10.6"/><path d="M14.3 0.6v2.2M14.3 4.6v9.4" stroke-width="1.5"/></g></svg>
<svg style="left:521px;top:648px" width="22" height="22" viewBox="0 0 22 22"><path d="M2 10.2 C2.6 4.6 6.6 1.4 11.4 1.4 C17 1.4 20.2 5.4 20.2 10.6 L20.2 12.6 L8 12.6 C8.2 15.4 10.4 17 13.4 17 C15.6 17 17.6 16.4 19.4 15.4 L19.4 19.4 C17.4 20.4 15.2 20.9 12.6 20.9 C7 20.9 3.6 17.6 3.6 12.6 C3.6 9.6 5 7.2 7.4 5.8 C4.8 6.4 3 8 2 10.2Z M8.2 9.2 L14.8 9.2 C14.8 7 13.6 5.8 11.6 5.8 C9.8 5.8 8.6 7.2 8.2 9.2Z" fill="#1b84e2" fill-rule="evenodd"/></svg>
<svg style="left:566px;top:650px" width="23" height="18" viewBox="0 0 23 18"><path d="M1.2 2.2 Q1.2 1.2 2.2 1.2 L8.4 1.2 L10.2 3 L20.6 3 Q21.6 3 21.6 4 L21.6 16.6 L1.2 16.6Z" fill="#f5c344"/><path d="M1.2 5.2 L21.6 5.2 L21.6 16.6 L1.2 16.6Z" fill="#fbd868"/><path d="M5.6 9.4 L17.2 9.4 L17.2 16.6 L14.6 16.6 L14.6 12 L8.2 12 L8.2 16.6 L5.6 16.6Z" fill="#3a8fe0"/><rect x="1.2" y="15.6" width="20.4" height="1.2" fill="#d9a62a"/></svg>
<svg style="left:611px;top:648px" width="24" height="23" viewBox="0 0 24 23"><path d="M7.6 7 L7.6 4.4 Q7.6 1.4 10.6 1.4 L13.4 1.4 Q16.4 1.4 16.4 4.4 L16.4 7" fill="none" stroke="#f4f4f4" stroke-width="1.5"/><path d="M1.2 6.6 L22.8 6.6 L22.8 21.8 L1.2 21.8Z" fill="#f6f6f6"/><rect x="8" y="10.4" width="3.6" height="3.6" fill="#e8443a"/><rect x="12.4" y="10.4" width="3.6" height="3.6" fill="#6cbf3c"/><rect x="8" y="14.8" width="3.6" height="3.6" fill="#2a8fe8"/><rect x="12.4" y="14.8" width="3.6" height="3.6" fill="#f6b820"/></svg>
<svg style="left:657px;top:648px" width="25" height="20" viewBox="0 0 25 20"><path d="M1 7.6 L12.4 1 L23.6 7.6 L23.6 18.8 L1 18.8Z" fill="#fff"/><path d="M5 8.2 L21.4 9.6 L13.4 13.8 L17.6 16.6 L11.2 13.4 L15 11.2Z" fill="#22313f"/></svg>
<svg style="left:704px;top:648px" width="26" height="25" viewBox="0 0 26 25"><circle cx="10.6" cy="11" r="9.6" fill="#e94435"/><path d="M10.6 11 L2.3 6.2 A9.6 9.6 0 0 0 8.2 20.3Z" fill="#34a853"/><path d="M10.6 11 L8.2 20.3 A9.6 9.6 0 0 0 20.2 11Z" fill="#fbc116"/><path d="M10.6 11 L20.2 11 A9.6 9.6 0 0 0 18.9 6.2 L10.6 6.2Z" fill="#e94435"/><circle cx="10.6" cy="11" r="4.5" fill="#fff"/><circle cx="10.6" cy="11" r="3.5" fill="#4a8df0"/><circle cx="17.4" cy="17" r="6.6" fill="#8e9cb0" stroke="#2a3645" stroke-width="0.8"/><circle cx="17" cy="15" r="2.6" fill="#e6c9a8"/><path d="M12.6 21.4 Q13 17.6 17.2 17.8 Q21.4 17.6 22 21.2 Q17.4 25 12.6 21.4Z" fill="#5a7fc0"/></svg>
<svg style="left:750px;top:649px" width="22" height="20" viewBox="0 0 22 20"><rect x="10" y="2.6" width="10.6" height="14.8" fill="#fff" stroke="#2b579a" stroke-width="0.8"/><g stroke="#8ea6d4" stroke-width="0.9"><path d="M12.6 5.4h6.6M12.6 7.6h6.6M12.6 9.8h6.6M12.6 12h6.6M12.6 14.2h6.6"/></g><path d="M1 3 L12.6 1 L12.6 19 L1 17Z" fill="#2b579a"/><text x="6.9" y="13.4" font-family="'Liberation Sans',sans-serif" font-size="8.6" font-weight="700" fill="#fff" text-anchor="middle">W</text></svg>
<svg style="left:797px;top:650px" width="19" height="19" viewBox="-9.5 -9.5 19 19"><g fill="#fff"><rect x="-1.9" y="-8.6" width="3.8" height="4" transform="rotate(0)"/><rect x="-1.9" y="-8.6" width="3.8" height="4" transform="rotate(45)"/><rect x="-1.9" y="-8.6" width="3.8" height="4" transform="rotate(90)"/><rect x="-1.9" y="-8.6" width="3.8" height="4" transform="rotate(135)"/><rect x="-1.9" y="-8.6" width="3.8" height="4" transform="rotate(180)"/><rect x="-1.9" y="-8.6" width="3.8" height="4" transform="rotate(225)"/><rect x="-1.9" y="-8.6" width="3.8" height="4" transform="rotate(270)"/><rect x="-1.9" y="-8.6" width="3.8" height="4" transform="rotate(315)"/></g><circle r="5.3" fill="none" stroke="#fff" stroke-width="2.6"/></svg>
<div style="left:558.9px;top:675px;width:37.39999999999998px;height:2px;background:#76e2b6;"></div>
<div style="left:696.9px;top:675px;width:37.200000000000045px;height:2px;background:#76e2b6;"></div>
<div style="left:742.5px;top:675px;width:37.5px;height:2px;background:#76e2b6;"></div>
<div style="left:788.3px;top:675px;width:37.60000000000002px;height:2px;background:#76e2b6;"></div>
<svg style="left:1014px;top:654px" width="15" height="10" viewBox="0 0 15 10"><path d="M1.8 8 L7.4 2.6 L13 8" fill="none" stroke="#f0f0f0" stroke-width="1.2"/></svg>
<svg style="left:1035px;top:653px" width="18" height="15" viewBox="0 0 18 15"><path d="M3.6 11.6 Q0.8 11.4 1 8.8 Q1.2 6.6 3.6 6.4 Q4.2 2.6 7.6 2.6 Q10.2 2.6 11.2 5 Q14.6 4.6 15 7.8 Q15.4 11.4 12 11.6Z" fill="#e8e8e8"/><circle cx="12.4" cy="10.4" r="3.6" fill="#8a8a8a" stroke="#d0d0d0" stroke-width="0.5"/><rect x="11.9" y="8.6" width="1" height="3.6" fill="#eee"/></svg>
<svg style="left:1056px;top:653px" width="19" height="12" viewBox="0 0 19 12"><rect x="4" y="2.6" width="12.6" height="7.4" rx="1" fill="#ececec"/><rect x="16.6" y="4.6" width="1.4" height="3.4" fill="#ececec"/><path d="M1.2 1 L3.4 1 L3.4 3.2 L5 3.2 L5 6.2 L1.2 6.2Z" fill="#ececec"/></svg>
<svg style="left:1081px;top:653px" width="15" height="14" viewBox="0 0 15 14"><g fill="none" stroke="#e6e6e6" stroke-width="1.1"><path d="M1.4 12.4 A11 11 0 0 1 12.4 1.4"/><path d="M4.8 12.4 A7.6 7.6 0 0 1 12.4 4.8"/><path d="M8.2 12.4 A4.2 4.2 0 0 1 12.4 8.2"/></g><circle cx="11.9" cy="11.9" r="1.2" fill="#fff"/></svg>
<svg style="left:1101px;top:653px" width="17" height="13" viewBox="0 0 17 13"><path d="M1.2 4.4 L3.8 4.4 L7 1.4 L7 11.4 L3.8 8.4 L1.2 8.4Z" fill="none" stroke="#eee" stroke-width="1"/><path d="M9.4 4.2 Q10.8 6.4 9.4 8.6M11.4 2.8 Q13.8 6.4 11.4 10M13.4 1.4 Q16.6 6.4 13.4 11.4" fill="none" stroke="#cfd4da" stroke-width="0.9"/></svg>
<span class="t" style="left:1129.30px;top:647.00px;font-size:10.4px;letter-spacing:0.455px;color:#fff;">11:11 AM</span>
<span class="t" style="left:1124.30px;top:664.00px;font-size:10.4px;letter-spacing:0.447px;color:#fff;">11/18/2021</span>
<svg style="left:1193px;top:651px" width="26" height="24" viewBox="0 0 26 24"><path d="M1.8 1.6 L17.2 1.6 L17.2 13.4 L8.2 13.4 L8.2 17 L4.6 13.4 L1.8 13.4Z" fill="#fff"/><g stroke="#33475c" stroke-width="1"><path d="M4.6 5h9.6M4.6 7.6h9.6M4.6 10.2h5.4"/></g><circle cx="16.4" cy="15.6" r="7" fill="#1d2431" stroke="#7a828c" stroke-width="0.9"/><text x="16.4" y="19.2" font-family="'Liberation Sans',sans-serif" font-size="10" font-weight="700" fill="#fff" text-anchor="middle">4</text></svg>
<div style="left:1228.5px;top:642px;width:1.0px;height:35px;background:#8a94a0;"></div>
</body></html>
